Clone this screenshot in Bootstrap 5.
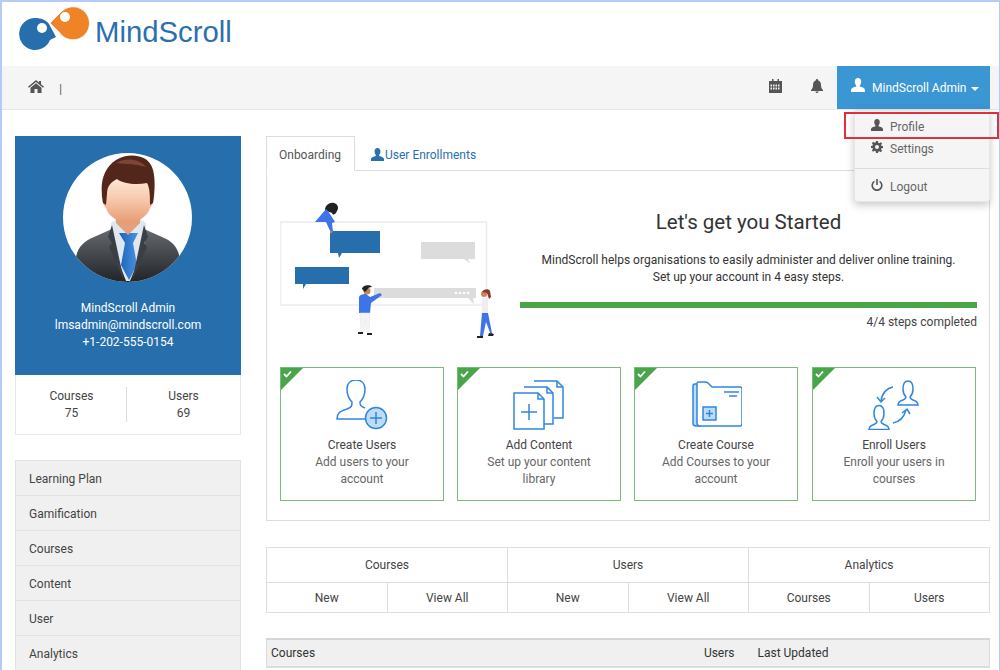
<!DOCTYPE html>
<html lang="en">
<head>
<meta charset="utf-8">
<title>MindScroll</title>
<link href="https://cdn.jsdelivr.net/npm/bootstrap@5.3.0/dist/css/bootstrap.min.css" rel="stylesheet">
<style>
html,body{height:670px;overflow:hidden;margin:0}
body{font-family:Roboto,"Liberation Sans",sans-serif;font-size:12px;color:#444;background:#fff}
.frame{height:670px;overflow:hidden;border:solid #b5caf7;border-width:2px 1px 0 2px;position:relative}
.brand-row{height:64px;padding:4px 0 0 16px;display:flex;align-items:flex-start;gap:1px}
.brand-name{font-family:"Liberation Sans",sans-serif;font-size:29.3px;color:#2a70ae;line-height:1;margin-top:11px}
.topbar{height:44px;background:#f5f5f5;border-bottom:1px solid #e6e6e6;padding:0 9px 0 26px;align-items:stretch;flex-wrap:nowrap}
.home-sep{color:#666;font-size:13px;margin:3px 0 0 15px}
.top-ico{fill:#555;display:block;flex:none}
.user-btn{width:153px;background:#3a97d3;color:#fff;font-size:12px;margin-left:14px;padding:0 14px;gap:7px}
.user-btn svg{fill:#fff;margin-top:-6px;flex:none}
.user-caret{width:0;height:0;border:4px solid transparent;border-top-color:#fff;border-bottom:0;margin-left:-2px;margin-top:2px}
.user-menu{position:absolute;top:108px;right:9px;left:auto;width:136px;height:92px;margin:0;background:#f5f5f5;border:1px solid #e6e6e6;border-radius:0 0 3px 3px;box-shadow:0 3px 8px rgba(0,0,0,.22);padding:5px 0 0;display:block;min-width:0}
.user-menu .dropdown-item{color:#666;padding:0 0 0 16px;display:flex;align-items:center;gap:7px;height:22px;font-size:12px}
.user-menu svg{fill:#555;margin-top:-4px;flex:none}
.user-menu .dropdown-divider{margin:8px 0 7px;border-color:#ddd}
.red-box{position:absolute;top:110px;left:842px;width:155px;height:27px;border:2px solid #e2303a;pointer-events:none;z-index:1100}
.page-body{padding:26px 9px 0 13px;gap:25px;align-items:flex-start}
.side-col{width:226px;flex:none}
.profile-box{background:#266eac;color:#fff;height:239px;text-align:center;padding-top:17px;line-height:17px}
.avatar-svg{display:block;margin:0 0 18px 48px}
.stats-box{border:1px solid #e6e6e6;border-top:0;height:60px;align-items:center;text-align:center;line-height:17px;color:#444}
.stats-item{height:35px;flex:1;padding-top:1px}
.stats-item:first-child{flex:none;width:111px;border-right:1px solid #ddd;padding-left:1px}
.menu-list{margin-top:26px;border-radius:0}
.menu-list .list-group-item{background:#f0f0f0;border:1px solid #e3e3e3;border-radius:0;height:36px;margin-top:-1px;padding:1px 13px 0;display:flex;align-items:center;color:#444;font-size:12px}
.main-col{flex:1;min-width:0}
.tabs-row{height:35px;border-color:#ddd;flex-wrap:nowrap}
.tabs-row .nav-link{height:35px;padding:2px 13px 0 15px;display:flex;align-items:center;gap:1px;border-radius:0;color:#2a70ae;font-size:12px;border:1px solid transparent}
.tabs-row .nav-link.active{color:#555;border-color:#ddd #ddd #fff;width:89px;padding-left:12px}
.tabs-row .nav-link svg{fill:#2a70ae;flex:none}
.tab-panel{border:1px solid #ddd;border-top:0;height:350px;padding:29px 12px 0 13px}
.intro-row{height:167px;gap:24px}
.intro-art{width:216px;flex:none}
.intro-copy{flex:1;text-align:center;line-height:17px;color:#333}
.intro-title{font-size:20.5px;font-weight:400;color:#333;line-height:26px;margin:9px 0 17px}
.green-bar{height:6px;border-radius:0;background:#e9e9e9;margin-top:16px}
.green-bar .progress-bar{background:#4aa54a}
.steps-done{text-align:right;margin-top:6px;color:#444}
.steps-row{gap:13px}
.step-card{width:164px;height:134px;border:1px solid #77bd77;border-radius:0;text-align:center;position:relative;padding-top:12px;line-height:17px;color:#666;flex:none;overflow:hidden}
.step-card:last-child{margin-left:1px}
.step-card svg.step-ico{display:block;margin:0 auto 7px}
.step-card b{font-weight:400;color:#444;display:block}
.step-flag{position:absolute;left:0;top:0}
.quick-table{margin:26px 0 0;width:100%;table-layout:fixed;border-color:#ddd;text-align:center;color:#444}
.quick-table td{padding:0;vertical-align:middle}
.quick-table tr:first-child td{height:35px}
.quick-table tr:last-child td{height:30px;padding-top:1px}
.list-table{margin:25px 0 0;width:100%;border-color:#ddd;color:#333}
.list-table th{background:#f0f0f0;font-weight:400;height:28px;padding:0 4px;vertical-align:middle;border-top:2px solid #d6d6d6;border-bottom:2px solid #ddd;color:#333}
</style>
</head>
<body>
<div class="frame">
  <div class="brand-row">
    <svg width="76" height="50" viewBox="0 0 76 50">
      <path d="M17 12c6 0 11 2 14 6l7 13-6 3a16 16 0 1 1-15-22z" fill="#266eac"/>
      <circle cx="24" cy="22" r="5" fill="#fff"/>
      <path d="M32 17L44 5A16.500 16.500 0 1 1 41 26z" fill="#ee8427" stroke="#fff" stroke-width=".8"/>
      <circle cx="47" cy="11" r="5" fill="#fff"/>
    </svg>
    <div class="brand-name">MindScroll</div>
  </div>
  <nav class="navbar topbar d-flex justify-content-start">
    <div class="d-flex align-items-center">
      <svg class="top-ico" width="16" height="13" viewBox="0 0 16 13" style="margin-top:-3px"><path d="M8 0L0 6.800l1 1L8 2l7 5.800 1-1-3-2.600V1h-2v1.500zM8 3.200L2.500 7.800V13h4V9h3v4h4V7.800z"/></svg>
      <span class="home-sep">|</span>
    </div>
    <div class="ms-auto d-flex align-items-center" style="gap:29px">
      <svg class="top-ico" width="13" height="14" viewBox="0 0 13 14" style="margin-top:-3px"><path fill-rule="evenodd" d="M3 0h1.500v2h4V0H10v2h3v12H0V2h3zM1.500 5.500v2H3v-2zm2.500 0v2h1.500v-2zm2.500 0v2H8v-2zm2.500 0v2h1.500v-2zM1.500 8.500v2H3v-2zm2.500 0v2h1.500v-2zm2.500 0v2H8v-2zm2.500 0v2h1.500v-2z"/></svg>
      <svg class="top-ico" width="12" height="14" viewBox="0 0 12 14" style="margin-top:-3px"><path d="M6 0a1 1 0 0 1 1 1.200C9 1.800 10 3.500 10 6c0 3 1 4 2 5v1H0v-1c1-1 2-2 2-5 0-2.500 1-4.200 3-4.800A1 1 0 0 1 6 0zM4.500 12.500h3a1.500 1.500 0 0 1-3 0z"/></svg>
    </div>
    <div class="user-btn d-flex align-items-center">
      <svg width="14" height="14" viewBox="0 0 14 14"><path d="M7 0c2 0 3.200 1.500 3.200 3.500S9.200 7 8.800 7.600v1C11 9.300 14 10 14 12v2H0v-2c0-2 3-2.700 5.200-3.400v-1C4.800 7 3.800 5.500 3.800 3.500S5 0 7 0z"/></svg>
      <span class="text-nowrap">MindScroll Admin</span>
      <span class="user-caret"></span>
    </div>
  </nav>
  <div class="dropdown-menu show user-menu">
    <a class="dropdown-item" href="#"><svg width="12" height="12" viewBox="0 0 14 14"><path d="M7 0c2 0 3.200 1.500 3.200 3.500S9.200 7 8.800 7.600v1C11 9.300 14 10 14 12v2H0v-2c0-2 3-2.700 5.200-3.400v-1C4.800 7 3.800 5.500 3.800 3.500S5 0 7 0z"/></svg>Profile</a>
    <a class="dropdown-item" href="#"><svg width="12" height="12" viewBox="0 0 12 12"><path fill-rule="evenodd" d="M5 0h2l.3 1.700 1.100.5L9.900 1.200l1.200 1.400-1 1.400.4 1.100L12 5v2l-1.500.3-.4 1.100 1 1.400-1.200 1.400-1.500-1-1.100.5L7 12H5l-.3-1.700-1.100-.5-1.500 1L.9 9.400l1-1.400-.4-1.100L0 7V5l1.500-.3.4-1.100-1-1.400 1.200-1.400 1.500 1 1.100-.5zM6 4a2 2 0 1 0 0 4 2 2 0 0 0 0-4z"/></svg>Settings</a>
    <hr class="dropdown-divider">
    <a class="dropdown-item" href="#"><svg width="12" height="12" viewBox="0 0 12 12"><path d="M5.200 0h1.600v6H5.200zM3.500 1.500v1.700a4 4 0 1 0 5 0V1.500a5.600 5.600 0 1 1-5 0z"/></svg>Logout</a>
  </div>
  <div class="red-box"></div>
  <div class="page-body d-flex">
    <aside class="side-col">
      <div class="profile-box">
        <svg class="avatar-svg" width="129" height="129" viewBox="-1 0 129 129">
          <defs>
            <clipPath id="avaClip"><circle cx="63.500" cy="64.500" r="64.500"/></clipPath>
            <linearGradient id="suitGrad" x1="0" y1="0" x2="0" y2="1"><stop offset="0" stop-color="#666a70"/><stop offset="1" stop-color="#1f2226"/></linearGradient>
            <linearGradient id="faceGrad" x1="0" y1="0" x2="0" y2="1"><stop offset="0" stop-color="#fff0e6"/><stop offset=".5" stop-color="#f8cdb2"/><stop offset="1" stop-color="#e79a74"/></linearGradient>
            <linearGradient id="tieGrad" x1="0" y1="0" x2="1" y2="0"><stop offset="0" stop-color="#1d62b8"/><stop offset="1" stop-color="#4b94e0"/></linearGradient>
          </defs>
          <circle cx="63.500" cy="64.500" r="64.500" fill="#fff"/>
          <g clip-path="url(#avaClip)">
            <path d="M12 104c2-10 8-16 18-20l18-8 16 8 16-8 18 8c10 4 16 10 18 22v24H10z" fill="url(#suitGrad)"/>
            <path d="M47 70l8-6h18l9 6-2 24-14 34h-4L49 94z" fill="#dfe7ef"/>
            <path d="M55 80h19l-5 10 4 22-8 15-8-15 4-22z" fill="url(#tieGrad)"/>
            <path d="M48 72l-4 12 4 6-3 4 15 34zM80 72l4 12-4 6 3 4-15 34z" fill="#3a3e45"/>
            <path d="M52 56h24v14l-12 12-12-12z" fill="#e2a07c"/>
            <path d="M40 42c-2-3-3-1-2 4 1 4 2 8 4 9 2 8 13 15 22 15s20-7 22-15c2-1 3-5 4-9 1-5 0-7-2-4 0-12-9-24-24-24S40 30 40 42z" fill="url(#faceGrad)"/>
            <path d="M42 52l-3-2c-3-16-2-33 13-43 13-8 30-5 35 5 5 9 4 26 2 38l-3 2c0-8 0-17-3-22-10 2-24 1-30-4-6 3-10 7-10 15z" fill="#53261c"/>
            <path d="M52 10c10-6 24-4 30 4-10-3-20-3-30-4z" fill="#7c4536"/>
          </g>
        </svg>
        <div>MindScroll Admin</div>
        <div>lmsadmin@mindscroll.com</div>
        <div>+1-202-555-0154</div>
      </div>
      <div class="stats-box d-flex">
        <div class="stats-item">Courses<br>75</div>
        <div class="stats-item">Users<br>69</div>
      </div>
      <div class="list-group menu-list">
        <a class="list-group-item" href="#">Learning Plan</a>
        <a class="list-group-item" href="#">Gamification</a>
        <a class="list-group-item" href="#">Courses</a>
        <a class="list-group-item" href="#">Content</a>
        <a class="list-group-item" href="#">User</a>
        <a class="list-group-item" href="#">Analytics</a>
      </div>
    </aside>
    <main class="main-col">
      <ul class="nav nav-tabs tabs-row">
        <li class="nav-item"><a class="nav-link active" href="#">Onboarding</a></li>
        <li class="nav-item"><a class="nav-link" href="#"><svg width="13" height="13" viewBox="0 0 14 14"><path d="M7 0c2 0 3.200 1.500 3.200 3.500S9.200 7 8.800 7.600v1C11 9.300 14 10 14 12v2H0v-2c0-2 3-2.700 5.200-3.400v-1C4.800 7 3.800 5.500 3.800 3.500S5 0 7 0z"/></svg>User Enrollments</a></li>
      </ul>
      <div class="tab-panel">
        <div class="intro-row d-flex">
          <svg class="intro-art" width="216" height="140" viewBox="0 0 216 140">
            <rect x="0.500" y="22" width="206" height="83" fill="#fff" stroke="#ececec" stroke-width="1.500"/>
            <path d="M50 31h50v22H62l-3 5-1-5h-8z" fill="#266eac"/>
            <path d="M141 42h54v17h-7l2 4-6-4h-43z" fill="#dcdcdc"/>
            <path d="M15 67h54v17H26l-3 5v-5h-8z" fill="#266eac"/>
            <path d="M94 88h102v10h-3l1 6-6-6H94z" fill="#dcdcdc"/>
            <g fill="#fff"><circle cx="176" cy="93" r="1.300"/><circle cx="180" cy="93" r="1.300"/><circle cx="184" cy="93" r="1.300"/><circle cx="188" cy="93" r="1.300"/></g>
            <path d="M45 10c0-5 5-8 9-7 4 1 5 5 3 8-1 3-4 5-5 2-1-1-4-1-7-3z" fill="#222"/>
            <path d="M35 22l11-13 2 2 7 11-3 1 1 9-2 1-5-11-2 0z" fill="#3f74e8"/>
            <circle cx="51" cy="32" r="1.200" fill="#c9835f"/>
            <circle cx="87" cy="91" r="3.500" fill="#c9835f"/><path d="M82 89c0-4 9-5 10-2-3 0-4 1-5 3l-2 2z" fill="#222"/>
            <path d="M79 98c0-3 3-4 7-4l4 3 10-4 2 2-11 8-1 10H79z" fill="#3f74e8"/>
            <path d="M80 113h10l-1 20h-2l-2-14-1 14h-3z" fill="#f4f4f4" stroke="#e5e5e5" stroke-width=".5"/>
            <path d="M78 132h5v2h-5zM87 133h5v2h-5z" fill="#222"/>
            <circle cx="204" cy="94" r="3" fill="#c9835f"/><path d="M202 92c1-3 7-4 8-1l1 6-2 2-2-6z" fill="#8a3a26"/>
            <path d="M202 98h6v15h-6z" fill="#eee"/>
            <path d="M202 113h6l4 20 1 1-2 1-5-13-3 14h-3z" fill="#3f74e8"/>
            <path d="M197 136h6v2h-6zM209 133l5 1-1 2-5 0z" fill="#222"/>
          </svg>
          <div class="intro-copy">
            <div class="intro-title">Let's get you Started</div>
            <div>MindScroll helps organisations to easily administer and deliver online training.</div>
            <div>Set up your account in 4 easy steps.</div>
            <div class="progress green-bar"><div class="progress-bar" style="width:100%"></div></div>
            <div class="steps-done">4/4 steps completed</div>
          </div>
        </div>
        <div class="steps-row d-flex">
          <div class="step-card">
            <svg class="step-flag" width="24" height="24" viewBox="0 0 24 24"><path d="M0 0h22L0 22z" fill="#4aa54a"/><path d="M3 6l2.500 2.500L10 3.500" fill="none" stroke="#fff" stroke-width="1.800"/></svg>
            <svg class="step-ico" width="52" height="50" viewBox="0 0 52 50" fill="none" stroke="#2f86e0" stroke-width="1.500"><path d="M30 39H1c0-6 3-8 10-10 5-2 5-3 5-7-4-4-5-9-5-13C11 3 15 0 20 0s9 3 9 9c0 4-1 9-5 13 0 3 0 4 5 6"/><circle cx="40" cy="38" r="10.500" fill="#bfdcf7"/><path d="M40 32v12M34 38h12"/></svg>
            <b>Create Users</b>Add users to your<br>account
          </div>
          <div class="step-card">
            <svg class="step-flag" width="24" height="24" viewBox="0 0 24 24"><path d="M0 0h22L0 22z" fill="#4aa54a"/><path d="M3 6l2.500 2.500L10 3.500" fill="none" stroke="#fff" stroke-width="1.800"/></svg>
            <svg class="step-ico" width="52" height="50" viewBox="0 0 52 50" fill="none" stroke="#2f86e0" stroke-width="1.500"><path d="M21 1h23l6 6v31h-9"/><path d="M11 7h23l6 6v31h-9"/><path d="M1 13h24l6 6v30H1z" fill="#fff"/><path d="M25 13v6h6"/><path d="M34 7v6h6M44 1v6h6"/><path d="M16 24v16M8 32h16"/></svg>
            <b>Add Content</b>Set up your content<br>library
          </div>
          <div class="step-card">
            <svg class="step-flag" width="24" height="24" viewBox="0 0 24 24"><path d="M0 0h22L0 22z" fill="#4aa54a"/><path d="M3 6l2.500 2.500L10 3.500" fill="none" stroke="#fff" stroke-width="1.800"/></svg>
            <svg class="step-ico" width="52" height="50" viewBox="0 0 52 50" fill="none" stroke="#2f86e0" stroke-width="1.500"><path d="M3 6v37c0 2 1 3 3 3h4V4H5C4 4 3 5 3 6z" fill="#bfdcf7"/><path d="M7 3v40c0 2 1 3 3 3h40c1 0 2-1 2-2V9c0-1-1-2-2-2H22l-4-4c-1-1-2-1-3-1H9C8 2 7 2 7 3z" fill="#fff"/><path d="M34 12h15M39 16h8"/><rect x="13" y="27" width="13" height="13" fill="#bfdcf7"/><path d="M19.500 30v7M16 33.500h7"/></svg>
            <b>Create Course</b>Add Courses to your<br>account
          </div>
          <div class="step-card">
            <svg class="step-flag" width="24" height="24" viewBox="0 0 24 24"><path d="M0 0h22L0 22z" fill="#4aa54a"/><path d="M3 6l2.500 2.500L10 3.500" fill="none" stroke="#fff" stroke-width="1.800"/></svg>
            <svg class="step-ico" width="52" height="50" viewBox="0 0 52 50" fill="none" stroke="#2f86e0" stroke-width="1.500"><path d="M30 25c0-3 2-4 5-5 2-1 3-1.500 3-3-2-2-3-4.500-3-8 0-5 2-8 5-8s5 3 5 8c0 3.500-1 6-3 8 0 1.500 1 2 3 3 3 1 5 2 5 5z"/><path d="M1 49.500c0-3 2-4 5-5 2-1 3-1.500 3-3-2-2-3-4.500-3-8 0-5 2-8 5-8s5 3 5 8c0 3.500-1 6-3 8 0 1.500 1 2 3 3 3 1 5 2 5 5z"/><path d="M25 7c-6 1-11 6-12 14"/><path d="M9 17l4 5 4-4"/><path d="M25 43c6-1 11-6 13-13"/><path d="M34 33l5-4 3 5"/></svg>
            <b>Enroll Users</b>Enroll your users in<br>courses
          </div>
        </div>
      </div>
      <table class="table table-bordered quick-table">
        <tbody>
          <tr><td colspan="2">Courses</td><td colspan="2">Users</td><td colspan="2">Analytics</td></tr>
          <tr><td>New</td><td>View All</td><td>New</td><td>View All</td><td>Courses</td><td>Users</td></tr>
        </tbody>
      </table>
      <table class="table table-bordered list-table">
        <thead><tr><th class="border-end-0">Courses</th><th class="border-start-0 border-end-0 text-end" style="width:100px">Users</th><th class="border-start-0" style="width:251px;padding-left:19px">Last Updated</th></tr></thead>
      </table>
    </main>
  </div>
</div>
<script src="https://cdn.jsdelivr.net/npm/bootstrap@5.3.0/dist/js/bootstrap.bundle.min.js"></script>
</body>
</html>
